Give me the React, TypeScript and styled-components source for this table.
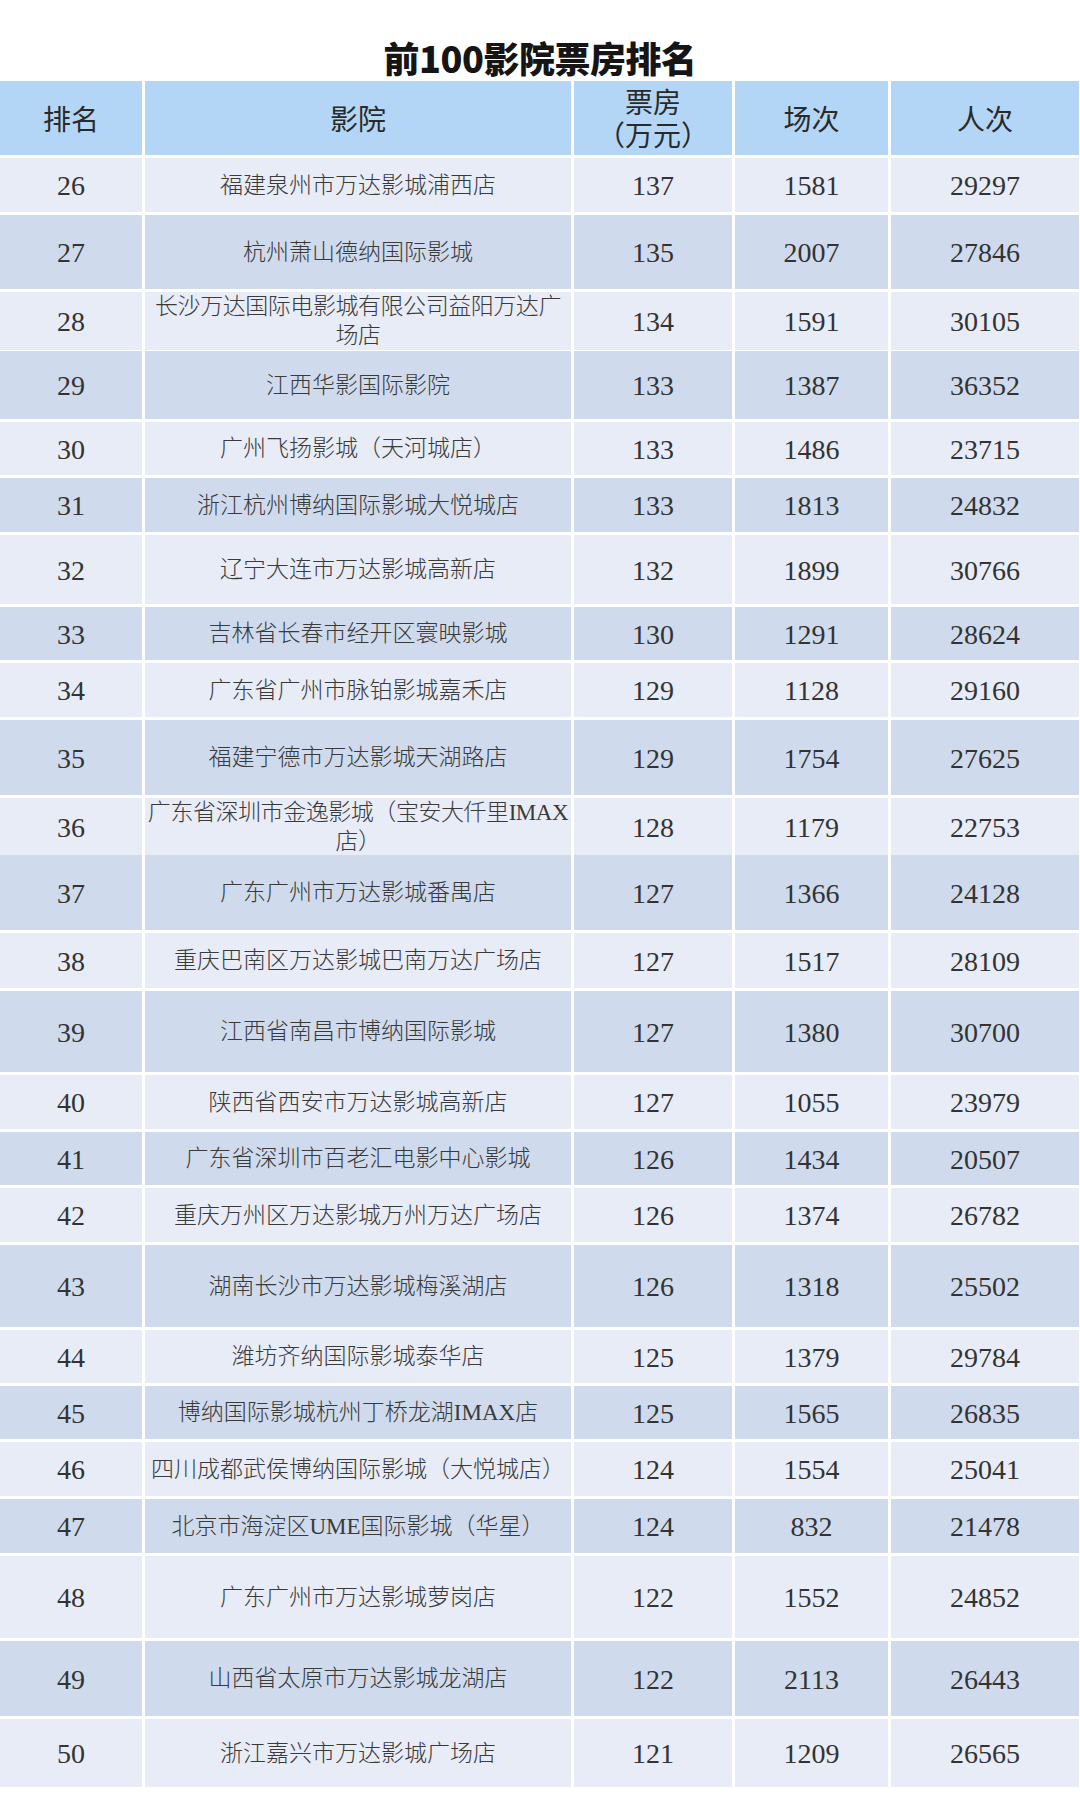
import React from 'react';
import styled, { createGlobalStyle } from 'styled-components';

type CinemaRow = {
  rank: number;
  name: string[];
  box: number;
  shows: number;
  people: number;
  h: number;
};

const rows: CinemaRow[] = [
  { rank: 26, name: ['福建泉州市万达影城浦西店'], box: 137, shows: 1581, people: 29297, h: 54 },
  { rank: 27, name: ['杭州萧山德纳国际影城'], box: 135, shows: 2007, people: 27846, h: 74 },
  { rank: 28, name: ['长沙万达国际电影城有限公司益阳万达广', '场店'], box: 134, shows: 1591, people: 30105, h: 56 },
  { rank: 29, name: ['江西华影国际影院'], box: 133, shows: 1387, people: 36352, h: 68 },
  { rank: 30, name: ['广州飞扬影城（天河城店）'], box: 133, shows: 1486, people: 23715, h: 53 },
  { rank: 31, name: ['浙江杭州博纳国际影城大悦城店'], box: 133, shows: 1813, people: 24832, h: 54 },
  { rank: 32, name: ['辽宁大连市万达影城高新店'], box: 132, shows: 1899, people: 30766, h: 69 },
  { rank: 33, name: ['吉林省长春市经开区寰映影城'], box: 130, shows: 1291, people: 28624, h: 53 },
  { rank: 34, name: ['广东省广州市脉铂影城嘉禾店'], box: 129, shows: 1128, people: 29160, h: 54 },
  { rank: 35, name: ['福建宁德市万达影城天湖路店'], box: 129, shows: 1754, people: 27625, h: 75 },
  { rank: 36, name: ['广东省深圳市金逸影城（宝安大仟里IMAX', '店）'], box: 128, shows: 1179, people: 22753, h: 54 },
  { rank: 37, name: ['广东广州市万达影城番禺店'], box: 127, shows: 1366, people: 24128, h: 75 },
  { rank: 38, name: ['重庆巴南区万达影城巴南万达广场店'], box: 127, shows: 1517, people: 28109, h: 55 },
  { rank: 39, name: ['江西省南昌市博纳国际影城'], box: 127, shows: 1380, people: 30700, h: 81 },
  { rank: 40, name: ['陕西省西安市万达影城高新店'], box: 127, shows: 1055, people: 23979, h: 54 },
  { rank: 41, name: ['广东省深圳市百老汇电影中心影城'], box: 126, shows: 1434, people: 20507, h: 53 },
  { rank: 42, name: ['重庆万州区万达影城万州万达广场店'], box: 126, shows: 1374, people: 26782, h: 54 },
  { rank: 43, name: ['湖南长沙市万达影城梅溪湖店'], box: 126, shows: 1318, people: 25502, h: 82 },
  { rank: 44, name: ['潍坊齐纳国际影城泰华店'], box: 125, shows: 1379, people: 29784, h: 53 },
  { rank: 45, name: ['博纳国际影城杭州丁桥龙湖IMAX店'], box: 125, shows: 1565, people: 26835, h: 53 },
  { rank: 46, name: ['四川成都武侯博纳国际影城（大悦城店）'], box: 124, shows: 1554, people: 25041, h: 54 },
  { rank: 47, name: ['北京市海淀区UME国际影城（华星）'], box: 124, shows: 832, people: 21478, h: 54 },
  { rank: 48, name: ['广东广州市万达影城萝岗店'], box: 122, shows: 1552, people: 24852, h: 82 },
  { rank: 49, name: ['山西省太原市万达影城龙湖店'], box: 122, shows: 2113, people: 26443, h: 75 },
  { rank: 50, name: ['浙江嘉兴市万达影城广场店'], box: 121, shows: 1209, people: 26565, h: 68 },
];

const GlobalStyle = createGlobalStyle`
  html, body {
    margin: 0;
    padding: 0;
    background: #ffffff;
  }
  body {
    width: 1080px;
    font-family: "Liberation Serif", "Noto Sans CJK SC", serif;
  }
`;

const Page = styled.div`
  width: 1080px;
  min-height: 1800px;
  background: #ffffff;
`;

const Title = styled.h1`
  margin: 0;
  height: 81px;
  box-sizing: border-box;
  padding-top: 39px;
  text-align: center;
  font-family: "Noto Sans CJK SC", sans-serif;
  font-weight: 900;
  font-size: 36px;
  line-height: 36px;
  color: #151515;
  letter-spacing: -0.5px;
`;

const Table = styled.div`
  display: flex;
  flex-direction: column;
  gap: 3px;
  width: 1079px;
`;

const Row = styled.div<{ $h: number }>`
  display: grid;
  grid-template-columns: 142px 426px 158px 153px 188px;
  column-gap: 3px;
  height: ${(p) => p.$h}px;
`;

type Tone = 'head' | 'dark' | 'light';

const toneColor: Record<Tone, string> = {
  head: '#b3d6f6',
  dark: '#cfdbec',
  light: '#e8ecf6',
};

const Cell = styled.div<{ $tone: Tone }>`
  display: flex;
  flex-direction: column;
  align-items: center;
  justify-content: center;
  text-align: center;
  background: ${(p) => toneColor[p.$tone]};
  color: #333333;
`;

const HeadText = styled.span`
  font-family: "Liberation Serif", "Noto Sans CJK SC", serif;
  font-weight: 400;
  font-size: 28px;
  line-height: 33px;
  color: #2a2a2a;
  padding-top: 4px;
`;

const NameLine = styled.span<{ $tight: boolean }>`
  font-family: "Liberation Serif", "Noto Sans CJK SC", serif;
  font-weight: 300;
  font-size: 23px;
  line-height: 29px;
  white-space: nowrap;
  color: #3a3a3a;
  letter-spacing: ${(p) => (p.$tight ? '-0.45px' : '0')};
`;

const Num = styled.span`
  font-family: "Liberation Serif", serif;
  font-size: 28px;
  line-height: 30px;
  color: #333333;
  padding-top: 2px;
`;

export default function App() {
  return (
    <Page>
      <GlobalStyle />
      <Title>前100影院票房排名</Title>
      <Table>
        <Row $h={74}>
          <Cell $tone="head">
            <HeadText>排名</HeadText>
          </Cell>
          <Cell $tone="head">
            <HeadText>影院</HeadText>
          </Cell>
          <Cell $tone="head">
            <HeadText>
              票房
              <br />
              （万元）
            </HeadText>
          </Cell>
          <Cell $tone="head">
            <HeadText>场次</HeadText>
          </Cell>
          <Cell $tone="head">
            <HeadText>人次</HeadText>
          </Cell>
        </Row>
        {rows.map((r) => {
          const tone: Tone = r.rank % 2 === 0 ? 'light' : 'dark';
          const tight = r.name.length > 1;
          return (
            <Row key={r.rank} $h={r.h}>
              <Cell $tone={tone}>
                <Num>{r.rank}</Num>
              </Cell>
              <Cell $tone={tone}>
                {r.name.map((line) => (
                  <NameLine key={line} $tight={tight}>
                    {line}
                  </NameLine>
                ))}
              </Cell>
              <Cell $tone={tone}>
                <Num>{r.box}</Num>
              </Cell>
              <Cell $tone={tone}>
                <Num>{r.shows}</Num>
              </Cell>
              <Cell $tone={tone}>
                <Num>{r.people}</Num>
              </Cell>
            </Row>
          );
        })}
      </Table>
    </Page>
  );
}
